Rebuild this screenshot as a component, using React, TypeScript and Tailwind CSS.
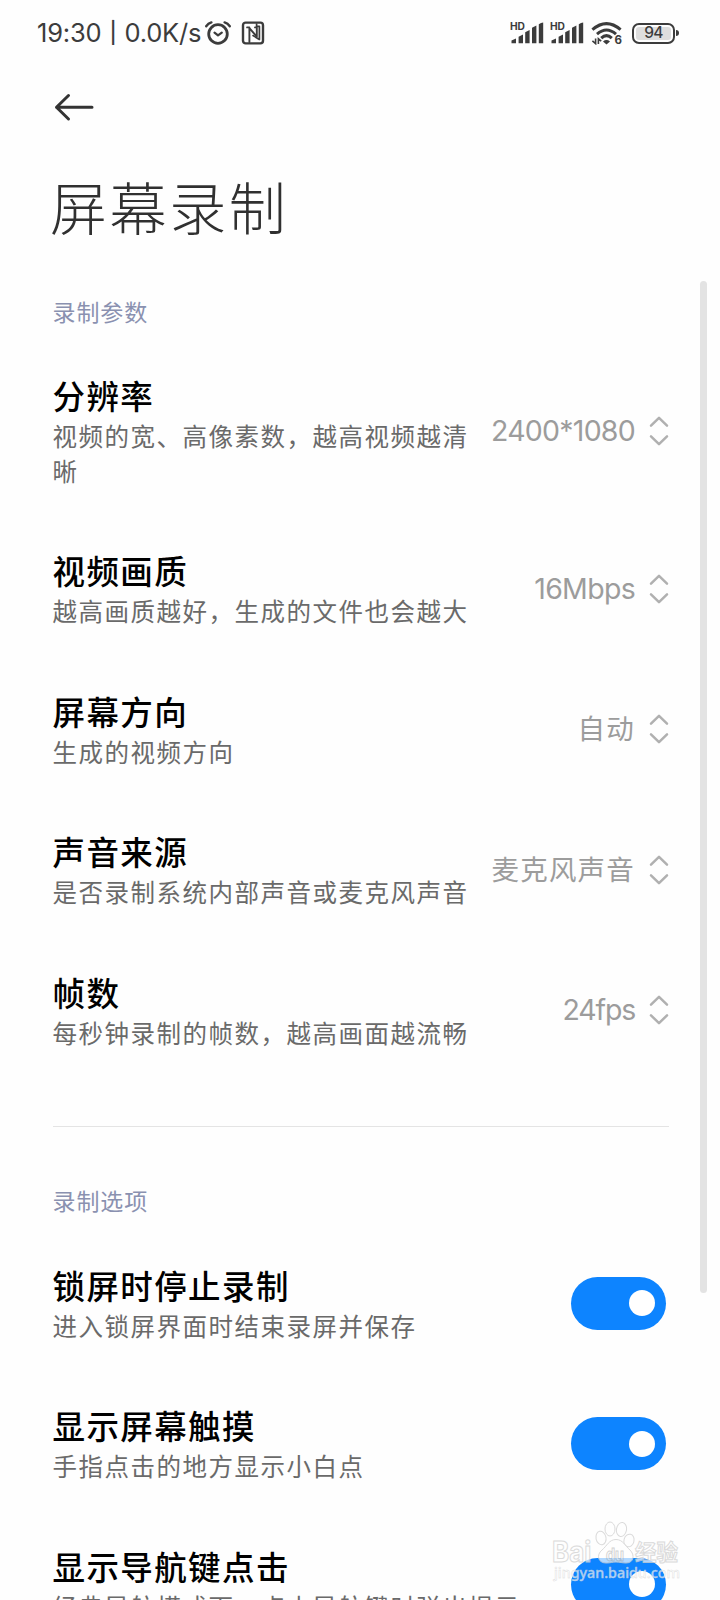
import React, { useState } from 'react';

interface SelectSetting {
  title: string;
  desc: string;
  value: string;
  latin?: string;
}

interface SwitchSetting {
  title: string;
  desc: string;
}

const selectSettings: SelectSetting[] = [
  { title: '分辨率', desc: '视频的宽、高像素数，越高视频越清晰', value: '2400*1080', latin: 'tracking-[-0.75px]' },
  { title: '视频画质', desc: '越高画质越好，生成的文件也会越大', value: '16Mbps', latin: 'tracking-[-0.7px]' },
  { title: '屏幕方向', desc: '生成的视频方向', value: '自动' },
  { title: '声音来源', desc: '是否录制系统内部声音或麦克风声音', value: '麦克风声音' },
  { title: '帧数', desc: '每秒钟录制的帧数，越高画面越流畅', value: '24fps', latin: 'tracking-[-1.2px]' },
];

const switchSettings: SwitchSetting[] = [
  { title: '锁屏时停止录制', desc: '进入锁屏界面时结束录屏并保存' },
  { title: '显示屏幕触摸', desc: '手指点击的地方显示小白点' },
  { title: '显示导航键点击', desc: '经典导航模式下，点击导航键时弹出提示' },
];

const SignalIcon = () => (
  <svg width="34" height="24" viewBox="0 0 34 24" fill="#3c3c3c">
    <text x="0" y="9" fontSize="10" fontWeight="700" fontFamily="Inter, sans-serif" textLength="15" lengthAdjust="spacingAndGlyphs">HD</text>
    <path d="M1.5 22.3V19.6L6 17.4V22.3Z" />
    <path d="M8.6 22.3V15.8L13 13.6V22.3Z" />
    <path d="M15.2 22.3V11.2L19.6 9V22.3Z" />
    <path d="M22 22.3V6.8L26.4 4.6V22.3Z" />
    <path d="M28.8 22.3V3.2Q31 1.4 33.2 1.4V22.3Z" />
  </svg>
);

const AlarmIcon = () => (
  <svg width="26" height="26" viewBox="0 0 26 26" fill="none" stroke="#3c3c3c" strokeWidth="2.8" strokeLinecap="round" strokeLinejoin="round">
    <circle cx="13" cy="14" r="9.3" />
    <path d="M9.5 12.6L13 15.4L16.8 12.6" strokeWidth="2.2" />
    <path d="M1.2 6.2Q3.2 3.4 6.4 2.4" strokeWidth="2.4" />
    <path d="M24.8 6.2Q22.8 3.4 19.6 2.4" strokeWidth="2.4" />
  </svg>
);

const NfcIcon = () => (
  <svg width="24" height="24" viewBox="0 0 24 24" fill="none" stroke="#3c3c3c" strokeWidth="2.4" strokeLinecap="round" strokeLinejoin="round">
    <rect x="2" y="1.6" width="20" height="20.8" rx="2.6" />
    <path d="M8.4 21V7.2L15.8 15.6V6.4H14" strokeWidth="1.9" />
    <path d="M6 6.4H8.4M15.6 3V5.4H18.4V18.4L12 14.6" strokeWidth="1.7" />
  </svg>
);

const WifiIcon = () => (
  <svg width="34" height="24" viewBox="0 0 34 24" fill="none" stroke="#3c3c3c" strokeWidth="3">
    <path d="M1.4 8.6Q15.5 -3.4 29.6 8.6" />
    <path d="M6 13.2Q15.5 4.8 25 13.2" />
    <path d="M10.2 17.2Q15.5 12.2 20.8 17.2" />
    <path d="M12 20.4Q15.5 17.8 19 20.4L15.5 23.4Z" fill="#3c3c3c" stroke="none" />
    <path d="M4.6 17.5V22.6L1.4 19.8M7.4 23V17.8L10.2 20.2" strokeWidth="1.6" />
    <text x="23.5" y="22.5" fontSize="11.5" fontWeight="700" fontFamily="Inter, sans-serif" fill="#3c3c3c" stroke="none">6</text>
  </svg>
);

const StatusBar = () => (
  <div className="flex h-[66px] items-center pl-[37px] text-[#3c3c3c]">
    <div className="flex w-[169px] items-center text-[25.5px] leading-[34px] tracking-[-0.2px] whitespace-nowrap">
      <span>19:30</span>
      <span className="mx-[8px] text-[21px] font-medium">|</span>
      <span>0.0K/s</span>
    </div>
    <div className="-ml-px">
      <AlarmIcon />
    </div>
    <div className="ml-[10px]">
      <NfcIcon />
    </div>
    <div className="ml-[245px] flex items-center">
      <SignalIcon />
      <div className="ml-[6px]">
        <SignalIcon />
      </div>
      <div className="ml-[7px]">
        <WifiIcon />
      </div>
      <div className="ml-[7px] flex h-[21px] w-[43px] items-center justify-center rounded-[7px] border-2 border-[#3c3c3c] p-[2px]">
        <div className="flex h-full w-full items-center justify-center rounded-[3px] bg-[#dedede] text-[15.5px] leading-none font-medium tracking-[-0.8px]">94</div>
      </div>
      <div className="ml-px h-[6px] w-[3px] rounded-r-sm bg-[#3c3c3c]" />
    </div>
  </div>
);

const UpDownIcon = () => (
  <svg width="20" height="30" viewBox="0 0 20 30" fill="none" stroke="#b0b0b0" strokeWidth="2.5" strokeLinecap="round" strokeLinejoin="round">
    <path d="M2 9.6L10 1.8L18 9.6" />
    <path d="M2 20.4L10 28.2L18 20.4" />
  </svg>
);

const SectionLabel = ({ children }: { children: React.ReactNode }) => (
  <h2 className="text-[23px] leading-[34px] tracking-[0.9px] text-[#8a91b0]">{children}</h2>
);

const RowText = ({ title, desc, wrap }: { title: string; desc: string; wrap?: boolean }) => (
  <div className={wrap ? 'w-[420px] flex-none pt-1' : 'flex-none pt-1 whitespace-nowrap'}>
    <h3 className="text-[32.5px] leading-[44px] font-medium tracking-[1.4px] text-black">{title}</h3>
    <p className="text-[24.5px] leading-[35px] tracking-[1.5px] text-[#6a6a6a]">{desc}</p>
  </div>
);

const SelectRow = ({ item }: { item: SelectSetting }) => (
  <div className="flex items-center justify-between py-[28.75px]">
    <RowText title={item.title} desc={item.desc} wrap />
    <div className="flex flex-none items-center gap-[14px] text-[#9c9c9c]">
      <span className={`whitespace-nowrap ${item.latin ? `text-[28.5px] leading-9 ${item.latin}` : 'text-[27.5px] leading-9 tracking-[1.2px]'}`}>
        {item.value}
      </span>
      <UpDownIcon />
    </div>
  </div>
);

const SwitchRow = ({ item }: { item: SwitchSetting }) => {
  const [on, setOn] = useState(true);
  return (
    <div className="flex items-center justify-between py-[28.75px]">
      <div className="w-[500px] flex-none">
        <RowText title={item.title} desc={item.desc} />
      </div>
      <button
        role="switch"
        aria-checked={on}
        aria-label={item.title}
        onClick={() => setOn(!on)}
        className={`mr-[3px] flex h-[53px] w-[95px] flex-none items-center rounded-full px-[11px] ${on ? 'justify-end bg-[#0d84ff]' : 'justify-start bg-[#e0e0e0]'}`}
      >
        <span className="h-[26px] w-[26px] rounded-full bg-white" />
      </button>
    </div>
  );
};

const Watermark = () => (
  <div className="pointer-events-none absolute top-[1518px] left-[551px] h-[82px] w-[140px] opacity-80">
    <svg width="140" height="70" viewBox="0 0 140 70" fill="#ffffff" fillOpacity="0.85" stroke="#d2d2d2" strokeWidth="1">
      <ellipse cx="50" cy="20" rx="5" ry="6.8" transform="rotate(-12 50 20)" />
      <ellipse cx="59" cy="11" rx="5" ry="7" />
      <ellipse cx="70.5" cy="11.5" rx="5" ry="7" transform="rotate(10 70.5 11.5)" />
      <ellipse cx="78" cy="22.5" rx="5" ry="6.4" transform="rotate(15 78 22.5)" />
      <path d="M65 21.5C58 21.5 56 28 51 32C45 37 47 45 55 45C60 45 61 44 65 44C69 44 71 45 75 45C83 45 84 37 79 32C74 28 72 21.5 65 21.5Z" />
      <g fontFamily="Inter, 'Noto Sans CJK SC', sans-serif" fontWeight="700">
        <text transform="translate(1 44) scale(0.93 1)" fontSize="28">Bai</text>
        <text transform="translate(55 42.5) scale(0.85 1)" fontSize="17" stroke="#c8c8c8">du</text>
        <text x="84" y="42" fontSize="21.5">经验</text>
      </g>
      <text x="3" y="60" fontSize="14" fontFamily="'Noto Sans', sans-serif" fontWeight="500" strokeWidth="0.4" textLength="126" lengthAdjust="spacingAndGlyphs">jingyan.baidu.com</text>
    </svg>
  </div>
);

export default function App() {
  return (
    <div className="relative h-[1600px] w-[720px] overflow-hidden bg-[#fefefe] font-['Inter','Noto_Sans_CJK_SC',sans-serif]">
      <StatusBar />

      <header className="pl-[52px]">
        <button aria-label="返回" className="mt-[26px] block">
          <svg width="44" height="30" viewBox="0 0 44 30" fill="none" stroke="#333333" strokeWidth="3" strokeLinecap="round" strokeLinejoin="round">
            <path d="M40 15.3H4.5M16.5 3.5L4.5 15.3L16.5 27" />
          </svg>
        </button>
        <h1 className="mt-[48px] -ml-[2px] text-[57px] leading-[80px] font-light tracking-[2.6px] text-[#303030]">屏幕录制</h1>
      </header>

      <main className="pr-[51px] pl-[52.5px]">
        <section className="pt-[46px]">
          <SectionLabel>录制参数</SectionLabel>
          <div className="pt-[13px]">
            {selectSettings.map((item) => (
              <SelectRow key={item.title} item={item} />
            ))}
          </div>
        </section>

        <hr className="mt-[45px] border-[#e4e4e4]" />

        <section className="pt-[58px]">
          <SectionLabel>录制选项</SectionLabel>
          <div className="pt-[14.5px]">
            {switchSettings.map((item) => (
              <SwitchRow key={item.title} item={item} />
            ))}
          </div>
        </section>
      </main>

      {/* scroll thumb */}
      <div className="absolute top-[281px] left-[700px] h-[1012px] w-[7px] rounded-full bg-[#e3e3e3]" />
      <Watermark />
    </div>
  );
}
